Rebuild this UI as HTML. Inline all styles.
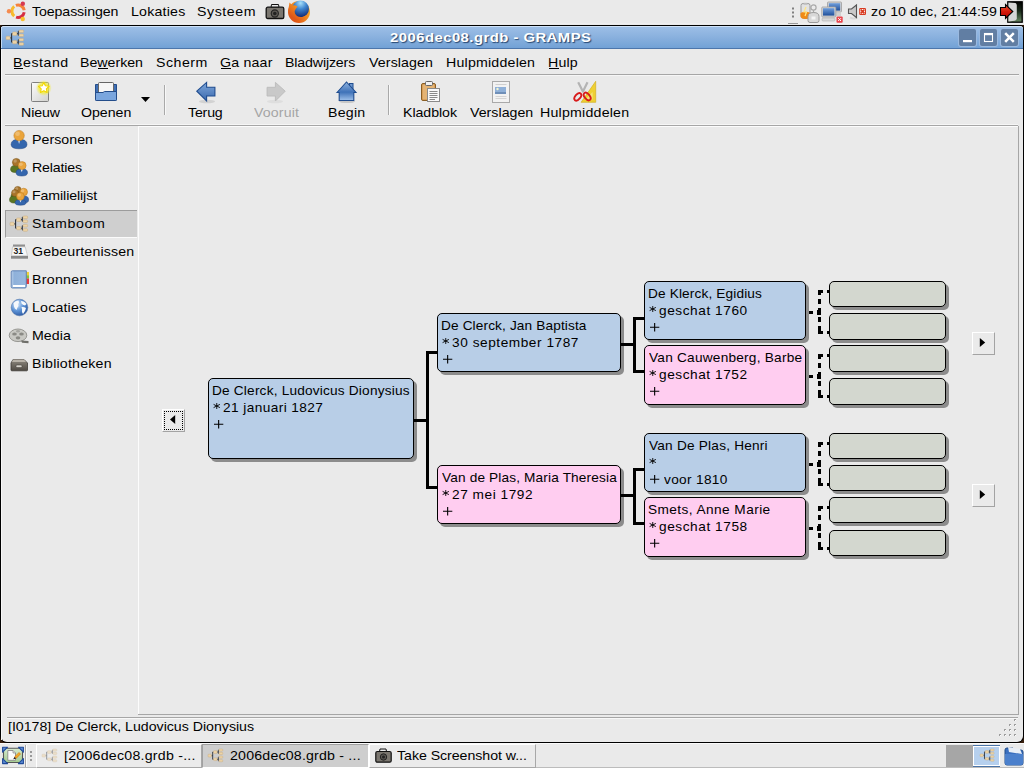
<!DOCTYPE html><html><head><meta charset="utf-8"><style>
html,body{margin:0;padding:0;width:1024px;height:768px;overflow:hidden;background:#eaeaea;position:relative}
.t{position:absolute;white-space:pre;font-family:"Liberation Sans",sans-serif}
svg{overflow:visible}
</style></head><body>
<div style="position:absolute;left:0px;top:0px;width:1024px;height:25px;background:#eaeaea"></div>
<div style="position:absolute;left:0px;top:23px;width:1024px;height:1px;background:#efefef"></div>
<svg style="position:absolute;left:4px;top:0px;" width="26.00" height="24.00" viewBox="0 0 26 24"><path d="M11.88 5.46 A6.2 6.2 0 0 1 20.21 10.23" fill="none" stroke="#f5823c" stroke-width="3"/><path d="M20.21 12.33 A6.2 6.2 0 0 1 12.08 17.11" fill="none" stroke="#d52f42" stroke-width="3"/><path d="M10.20 16.07 A6.2 6.2 0 0 1 10.20 6.43" fill="none" stroke="#f7bb2d" stroke-width="3"/><circle cx="18.82" cy="3.70" r="2.2" fill="#d63a52"/><circle cx="5.00" cy="11.25" r="2.2" fill="#f58b4f"/><circle cx="18.74" cy="18.96" r="2.2" fill="#f8bf2f"/></svg>
<div class="t" style="left:31.93px;top:5px;font-size:13.5px;line-height:13.5px;letter-spacing:-0.094px;font-weight:400;color:#000;transform:scaleX(1.05);transform-origin:0 0;">Toepassingen</div>
<div class="t" style="left:130.61px;top:5px;font-size:13.5px;line-height:13.5px;letter-spacing:0.194px;font-weight:400;color:#000;transform:scaleX(1.05);transform-origin:0 0;">Lokaties</div>
<div class="t" style="left:197.48px;top:5px;font-size:13.5px;line-height:13.5px;letter-spacing:0.546px;font-weight:400;color:#000;transform:scaleX(1.05);transform-origin:0 0;">Systeem</div>
<svg style="position:absolute;left:265px;top:3px;" width="20.00" height="17.00" viewBox="0 0 20 17">
<path d="M6.5 1.5 H13.5 L14 4.5 H6Z" fill="#e8e8e8" stroke="#111"/>
<rect x="1.2" y="4.2" width="17.6" height="11.3" rx="1.6" fill="#7a766f" stroke="#111" stroke-width="1.3"/>
<circle cx="9.8" cy="10.5" r="3.6" fill="#5a5752" stroke="#222" stroke-width="1.1"/>
<circle cx="9.8" cy="10.5" r="1.8" fill="#222"/>
</svg>
<svg style="position:absolute;left:286px;top:0px;" width="26.00" height="24.00" viewBox="0 0 26 24">
<defs><radialGradient id="gGlobe" cx="0.5" cy="0.15" r="0.8"><stop offset="0" stop-color="#a8e0fa"/><stop offset="0.45" stop-color="#3f86cf"/><stop offset="1" stop-color="#16307a"/></radialGradient>
<linearGradient id="gFox" x1="1" y1="0" x2="0" y2="1"><stop offset="0" stop-color="#fbd23a"/><stop offset="0.45" stop-color="#f28a1e"/><stop offset="1" stop-color="#d23a16"/></linearGradient></defs>
<circle cx="13" cy="12" r="11" fill="url(#gFox)"/>
<circle cx="14.5" cy="9" r="8.5" fill="url(#gGlobe)"/>
<path d="M24 11 A11 11 0 0 1 2.2 10.5 L3.5 2.5 L6.5 5.5 Q9.5 4.8 11.5 6.8 L10 8.5 Q8 10.5 9 13.5 Q11 17.5 16 17 Q21 16 24 11Z" fill="url(#gFox)"/>
</svg>
<svg style="position:absolute;left:786px;top:0px;" width="14.00" height="25.00" viewBox="0 0 14 25"><g fill="#808080"><rect x="6" y="7.5" width="2" height="2"/><rect x="6" y="11.5" width="2" height="2"/><rect x="6" y="15.5" width="2" height="2"/></g><rect x="2" y="23" width="10" height="1" fill="#9a9a9a"/></svg>
<svg style="position:absolute;left:798px;top:2px;" width="22.00" height="21.00" viewBox="0 0 22 21">
<path d="M3 3.5 Q3 1.5 5 1.5 H10 Q12 1.5 12 3.5 V14 Q12 16.5 7.5 16.5 Q3 16.5 3 14Z" fill="#e2e2e2" stroke="#9a9a9a"/>
<rect x="5.5" y="0.8" width="4" height="2" fill="#bdbdbd"/>
<path d="M2.5 11 Q7.5 8.5 12.5 11 V14 Q12.5 17 7.5 17 Q2.5 17 2.5 14Z" fill="#f08a16"/>
<path d="M8 5 L6 10 H8.5 L7 14" stroke="#ffe680" stroke-width="1.2" fill="none"/>
<circle cx="15.5" cy="5.5" r="2.6" fill="none" stroke="#a9a9a9" stroke-width="1.2"/>
<path d="M15.5 8 V11" stroke="#a9a9a9" stroke-width="1.2"/>
<path d="M10 14.5 Q10 10.5 15.5 10.5 Q21 10.5 21 14.5 V18.5 Q21 20.5 19 20.5 H12 Q10 20.5 10 18.5Z" fill="#d8d8d8" stroke="#9a9a9a"/>
<rect x="13.5" y="14.5" width="4" height="3" fill="#f4f4f4"/>
</svg>
<svg style="position:absolute;left:821px;top:1px;" width="23.00" height="23.00" viewBox="0 0 23 23">
<defs><linearGradient id="gScr" x1="0" y1="0" x2="0" y2="1"><stop offset="0" stop-color="#6f9edb"/><stop offset="1" stop-color="#1f4f9a"/></linearGradient></defs>
<rect x="6.5" y="1" width="14" height="10" rx="0.8" fill="#d6d6d6" stroke="#9c9c9c" stroke-width="0.8"/>
<rect x="7.8" y="2.2" width="11.4" height="7.4" fill="url(#gScr)"/>
<rect x="10" y="12" width="10" height="3" fill="#d0d0d0"/>
<rect x="0.8" y="6" width="14" height="10" rx="0.8" fill="#d6d6d6" stroke="#9c9c9c" stroke-width="0.8"/>
<rect x="2" y="7.2" width="11.4" height="7.4" fill="url(#gScr)"/>
<rect x="1" y="17" width="13" height="3" rx="1" fill="#d8d8d8" stroke="#b0b0b0" stroke-width="0.6"/>
<rect x="15.5" y="15.5" width="6.2" height="6.2" rx="1" fill="#e8464d"/>
<path d="M17.2 17.2 L20 20 M20 17.2 L17.2 20" stroke="#fff" stroke-width="1"/>
</svg>
<svg style="position:absolute;left:847px;top:4px;" width="21.00" height="16.00" viewBox="0 0 21 16">
<path d="M1.5 5 H4.5 L9.5 1 V13.5 L4.5 9.5 H1.5Z" fill="#c9c9c9" stroke="#555" stroke-width="1.1"/>
<path d="M3 13.5 Q7 15.5 10 13.5" stroke="#000" stroke-opacity="0.08" stroke-width="2" fill="none"/>
<rect x="12.2" y="3.9" width="6.8" height="7" rx="1.2" fill="#d83a20"/>
<rect x="13.3" y="5" width="4.6" height="4.8" fill="#fff"/>
<path d="M13.8 5.5 L17.4 9.3 M17.4 5.5 L13.8 9.3" stroke="#d83a20" stroke-width="1.7"/>
</svg>
<div class="t" style="left:871.38px;top:5px;font-size:13.5px;line-height:13.5px;letter-spacing:0.072px;font-weight:400;color:#000;transform:scaleX(1.05);transform-origin:0 0;">zo 10 dec, 21:44:59</div>
<svg style="position:absolute;left:999px;top:0px;" width="25.00" height="24.00" viewBox="0 0 25 24">
<defs><linearGradient id="gDoor" x1="0" y1="0" x2="0" y2="1"><stop offset="0" stop-color="#000"/><stop offset="0.45" stop-color="#1a2a1a"/><stop offset="1" stop-color="#6a8a64"/></linearGradient>
<linearGradient id="gLo" x1="0" y1="0" x2="0" y2="1"><stop offset="0" stop-color="#ee5a35"/><stop offset="0.5" stop-color="#d41a0a"/><stop offset="1" stop-color="#b00000"/></linearGradient></defs>
<rect x="8.8" y="1.8" width="14.4" height="20.4" fill="url(#gDoor)" stroke="#000" stroke-width="1.3"/>
<path d="M9.4 2.4 L16.5 3 Q17.8 3.6 17.8 5.5 V18.5 Q17.6 20.2 15.5 20.8 L9.4 21.6Z" fill="#d6d6d6"/>
<path d="M1.5 7.5 H6.5 V4.5 L13.8 11.5 L6.5 18.5 V15.5 H1.5Z" fill="url(#gLo)" stroke="#000" stroke-width="1.1" stroke-linejoin="miter"/>
</svg>
<div style="position:absolute;left:0px;top:25px;width:1024px;height:718px;background:#3a200e"></div>
<div style="position:absolute;left:0px;top:25px;width:1024px;height:718px;background:#000;border-radius:4px 4px 7px 7px"></div>
<div style="position:absolute;left:1px;top:26px;width:1022px;height:716px;background:#eaeaea;border-radius:3px 3px 6px 6px"></div>
<div style="position:absolute;left:1px;top:27px;width:1px;height:713px;background:#f8f8f8"></div>
<div style="position:absolute;left:1px;top:26px;width:1022px;height:23px;background:linear-gradient(#9cbee6,#8ab1de 45%,#70a0d5);border-radius:3px 3px 0 0;border-top:1px solid #cfe2f7;box-sizing:border-box"></div>
<div style="position:absolute;left:1px;top:48px;width:1022px;height:1px;background:#4d76ab"></div>
<div style="position:absolute;left:1px;top:28px;width:1px;height:20px;background:#c4daf2"></div>
<svg style="position:absolute;left:5.7px;top:29.8px;" width="18.00" height="16.00" viewBox="0 0 18 16"><path d="M4 7.9 H5.6 M5.6 3.6 V12.3 M5.6 3.6 H6.8 M5.6 12.3 H6.8 M10.6 3.6 H12.3 M12.3 1.3 V5.3 M12.3 1.3 H13 M12.3 5.3 H13 M10.6 12.3 H12.3 M12.3 9.7 V14 M12.3 9.7 H13 M12.3 14 H13" stroke="#2c3440" stroke-width="1.1" fill="none"/><rect x="0" y="6.2" width="4.2" height="3.4" rx="0.9" fill="#ecd3a6" stroke="#c9ab7c" stroke-width="0.5"/><rect x="6.5" y="2" width="4.4" height="3.4" rx="0.9" fill="#ecd3a6" stroke="#c9ab7c" stroke-width="0.5"/><rect x="6.5" y="10.6" width="4.4" height="3.2" rx="0.9" fill="#ecd3a6" stroke="#c9ab7c" stroke-width="0.5"/><rect x="13" y="0" width="4.6" height="2.6" rx="0.9" fill="#ecd3a6" stroke="#c9ab7c" stroke-width="0.5"/><rect x="13" y="4" width="4.6" height="2.6" rx="0.9" fill="#ecd3a6" stroke="#c9ab7c" stroke-width="0.5"/><rect x="13" y="8.4" width="4.6" height="2.6" rx="0.9" fill="#ecd3a6" stroke="#c9ab7c" stroke-width="0.5"/><rect x="13" y="12.7" width="4.6" height="2.6" rx="0.9" fill="#ecd3a6" stroke="#c9ab7c" stroke-width="0.5"/></svg>
<div class="t" style="left:389.80px;top:31px;font-size:13.5px;line-height:13.5px;letter-spacing:0.425px;font-weight:700;color:#fff;transform:scaleX(1.1);transform-origin:0 0;text-shadow:1px 1px 1px #26466f">2006dec08.grdb - GRAMPS</div>
<div style="position:absolute;left:959px;top:29px;width:17px;height:17px;background:#617ea3;border-radius:2px;box-shadow:0 0 0 1px #9ab9df"></div>
<div style="position:absolute;left:980px;top:29px;width:17px;height:17px;background:#617ea3;border-radius:2px;box-shadow:0 0 0 1px #9ab9df"></div>
<div style="position:absolute;left:1001px;top:29px;width:17px;height:17px;background:#617ea3;border-radius:2px;box-shadow:0 0 0 1px #9ab9df"></div>
<svg style="position:absolute;left:959px;top:29px;" width="60.00" height="18.00" viewBox="0 0 60 18">
<rect x="4" y="11" width="9" height="2.2" fill="#fff"/>
<rect x="25.5" y="4.5" width="8" height="8" fill="none" stroke="#fff" stroke-width="1.1"/>
<rect x="25" y="4" width="9" height="2.2" fill="#fff"/>
<path d="M46.2 4.2 L54.8 12.8 M54.8 4.2 L46.2 12.8" stroke="#fff" stroke-width="2.5"/>
</svg>
<div class="t" style="left:13.21px;top:56px;font-size:13.5px;line-height:13.5px;letter-spacing:0.501px;font-weight:400;color:#000;transform:scaleX(1.05);transform-origin:0 0;">Bestand</div>
<div class="t" style="left:80.21px;top:56px;font-size:13.5px;line-height:13.5px;letter-spacing:-0.007px;font-weight:400;color:#000;transform:scaleX(1.05);transform-origin:0 0;">Bewerken</div>
<div class="t" style="left:156.28px;top:56px;font-size:13.5px;line-height:13.5px;letter-spacing:0.488px;font-weight:400;color:#000;transform:scaleX(1.05);transform-origin:0 0;">Scherm</div>
<div class="t" style="left:219.67px;top:56px;font-size:13.5px;line-height:13.5px;letter-spacing:0.179px;font-weight:400;color:#000;transform:scaleX(1.05);transform-origin:0 0;">Ga naar</div>
<div class="t" style="left:285.41px;top:56px;font-size:13.5px;line-height:13.5px;letter-spacing:-0.139px;font-weight:400;color:#000;transform:scaleX(1.05);transform-origin:0 0;">Bladwijzers</div>
<div class="t" style="left:369.15px;top:56px;font-size:13.5px;line-height:13.5px;letter-spacing:0.113px;font-weight:400;color:#000;transform:scaleX(1.05);transform-origin:0 0;">Verslagen</div>
<div class="t" style="left:445.81px;top:56px;font-size:13.5px;line-height:13.5px;letter-spacing:0.200px;font-weight:400;color:#000;transform:scaleX(1.05);transform-origin:0 0;">Hulpmiddelen</div>
<div class="t" style="left:547.81px;top:56px;font-size:13.5px;line-height:13.5px;letter-spacing:0.180px;font-weight:400;color:#000;transform:scaleX(1.05);transform-origin:0 0;">Hulp</div>
<div style="position:absolute;left:14px;top:68px;width:9px;height:1px;background:#000"></div>
<div style="position:absolute;left:98px;top:68px;width:10px;height:1px;background:#000"></div>
<div style="position:absolute;left:221px;top:68px;width:10px;height:1px;background:#000"></div>
<div style="position:absolute;left:549px;top:68px;width:10px;height:1px;background:#000"></div>
<div style="position:absolute;left:5px;top:74px;width:1014px;height:1px;background:#a6a6a6"></div>
<div style="position:absolute;left:5px;top:75px;width:1014px;height:1px;background:#f6f6f6"></div>
<div class="t" style="left:21.21px;top:106px;font-size:13.5px;line-height:13.5px;letter-spacing:-0.078px;font-weight:400;color:#000;transform:scaleX(1.05);transform-origin:0 0;">Nieuw</div>
<div class="t" style="left:81.28px;top:106px;font-size:13.5px;line-height:13.5px;letter-spacing:-0.022px;font-weight:400;color:#000;transform:scaleX(1.05);transform-origin:0 0;">Openen</div>
<div class="t" style="left:187.93px;top:106px;font-size:13.5px;line-height:13.5px;letter-spacing:-0.177px;font-weight:400;color:#000;transform:scaleX(1.05);transform-origin:0 0;">Terug</div>
<div class="t" style="left:253.75px;top:106px;font-size:13.5px;line-height:13.5px;letter-spacing:0.138px;font-weight:400;color:#a5a5a5;transform:scaleX(1.05);transform-origin:0 0;">Vooruit</div>
<div class="t" style="left:328.21px;top:106px;font-size:13.5px;line-height:13.5px;letter-spacing:0.220px;font-weight:400;color:#000;transform:scaleX(1.05);transform-origin:0 0;">Begin</div>
<div class="t" style="left:403.20px;top:106px;font-size:13.5px;line-height:13.5px;letter-spacing:-0.051px;font-weight:400;color:#000;transform:scaleX(1.05);transform-origin:0 0;">Kladblok</div>
<div class="t" style="left:469.95px;top:106px;font-size:13.5px;line-height:13.5px;letter-spacing:0.022px;font-weight:400;color:#000;transform:scaleX(1.05);transform-origin:0 0;">Verslagen</div>
<div class="t" style="left:539.81px;top:106px;font-size:13.5px;line-height:13.5px;letter-spacing:0.210px;font-weight:400;color:#000;transform:scaleX(1.05);transform-origin:0 0;">Hulpmiddelen</div>
<svg style="position:absolute;left:30px;top:80px;" width="24.00" height="24.00" viewBox="0 0 24 24">
<defs><linearGradient id="gNew" x1="0" y1="0" x2="1" y2="1"><stop offset="0" stop-color="#fbfbfb"/><stop offset="1" stop-color="#d2d2ce"/></linearGradient>
<radialGradient id="gGlow"><stop offset="0" stop-color="#ffff60"/><stop offset="0.6" stop-color="#f2ec3a" stop-opacity="0.8"/><stop offset="1" stop-color="#f2ec3a" stop-opacity="0"/></radialGradient></defs>
<rect x="1.5" y="2.5" width="17" height="19" rx="1" fill="url(#gNew)" stroke="#7f7f7f"/>
<circle cx="13.8" cy="8" r="8" fill="url(#gGlow)"/>
<path d="M13.80 2.40 L15.39 5.82 L19.13 6.27 L16.37 8.83 L17.09 12.53 L13.80 10.70 L10.51 12.53 L11.23 8.83 L8.47 6.27 L12.21 5.82Z" fill="#fff" stroke="#f2d600" stroke-width="1.1" stroke-linejoin="round"/>
</svg>
<svg style="position:absolute;left:94px;top:80px;" width="24.00" height="22.00" viewBox="0 0 24 22">
<path d="M1.5 4.5 H4.5 V12 H19.5 V4.5 H22.5 V19.5 Q22.5 20.5 21.5 20.5 H2.5 Q1.5 20.5 1.5 19.5Z" fill="#3f6fb5" stroke="#244d8a"/>
<rect x="4.5" y="2.5" width="15" height="11" rx="1" fill="#f6f6f6" stroke="#666"/>
<path d="M1.5 12.5 H9 L10.5 11.5 H22.5 V19.5 Q22.5 20.5 21.5 20.5 H2.5 Q1.5 20.5 1.5 19.5Z" fill="#7aa6de" stroke="#244d8a"/>
</svg>
<svg style="position:absolute;left:140px;top:96px;" width="11.00" height="7.00" viewBox="0 0 11 7"><path d="M1 1 H10 L5.5 6Z" fill="#000"/></svg>
<div style="position:absolute;left:164px;top:85px;width:1px;height:30px;background:#a9a9a9"></div>
<div style="position:absolute;left:165px;top:85px;width:1px;height:30px;background:#f8f8f8"></div>
<div style="position:absolute;left:388px;top:85px;width:1px;height:30px;background:#a9a9a9"></div>
<div style="position:absolute;left:389px;top:85px;width:1px;height:30px;background:#f8f8f8"></div>
<svg style="position:absolute;left:195px;top:80px;" width="22.00" height="24.00" viewBox="0 0 22 24">
<defs><linearGradient id="gArr" x1="0" y1="0" x2="0" y2="1"><stop offset="0" stop-color="#7ea7db"/><stop offset="1" stop-color="#3a68ad"/></linearGradient></defs>
<ellipse cx="12" cy="21.5" rx="8" ry="1.8" fill="#000" opacity="0.10"/>
<path d="M1.8 11.2 L11.6 2.4 V7.3 H19.9 V16 H11.6 V21Z" fill="url(#gArr)" stroke="#1f4c8f" stroke-width="1.1" stroke-linejoin="miter"/>
</svg>
<svg style="position:absolute;left:265px;top:80px;" width="22.00" height="24.00" viewBox="0 0 22 24">
<ellipse cx="10" cy="21.5" rx="8" ry="1.8" fill="#000" opacity="0.05"/>
<path d="M20.2 11.2 L10.4 2.4 V7.3 H2.1 V16 H10.4 V21Z" fill="#c9c9c9" stroke="#bdbdbd" stroke-width="1"/>
</svg>
<svg style="position:absolute;left:336px;top:80px;" width="22.00" height="24.00" viewBox="0 0 22 24">
<defs><linearGradient id="gHome" x1="0" y1="0" x2="0" y2="1"><stop offset="0" stop-color="#8fb3e0"/><stop offset="0.55" stop-color="#3f72b8"/><stop offset="1" stop-color="#9ec0ea"/></linearGradient></defs>
<ellipse cx="11" cy="21.5" rx="8" ry="1.6" fill="#000" opacity="0.15"/>
<rect x="13.5" y="3.5" width="3.5" height="6" fill="#6d97cf" stroke="#1f4c8f"/>
<path d="M1 12.5 L10.5 2 L20 12.5 H17.8 V20.5 H3.2 V12.5Z" fill="url(#gHome)" stroke="#1f4c8f" stroke-width="1.1" stroke-linejoin="miter"/>
</svg>
<svg style="position:absolute;left:420px;top:80px;" width="22.00" height="23.00" viewBox="0 0 22 23">
<rect x="1.5" y="3.5" width="14" height="17" rx="1.5" fill="#d9a05a" stroke="#8a5e24"/>
<rect x="3" y="5" width="11" height="14" fill="#f0c890" opacity="0.5"/>
<rect x="5.5" y="1.5" width="7" height="4" rx="1" fill="#f2f2f2" stroke="#666"/>
<rect x="7.5" y="8.5" width="12" height="13" fill="#fafafa" stroke="#8a8a8a"/>
<path d="M9.5 11.5 H17.5 M9.5 13.5 H17.5 M9.5 15.5 H17.5 M9.5 17.5 H17.5 M9.5 19.5 H15" stroke="#8a8a8a" stroke-width="1"/>
</svg>
<svg style="position:absolute;left:491px;top:80px;" width="20.00" height="24.00" viewBox="0 0 20 24">
<rect x="1.5" y="1.5" width="17" height="21" fill="#f2f2f2" stroke="#a9a9a9"/>
<path d="M4.5 4.5 H15.5" stroke="#cfcfcf"/>
<rect x="4" y="7" width="11" height="7" fill="#8fb0d8"/>
<rect x="4" y="12" width="11" height="2" fill="#6f8fb8"/>
<circle cx="6.5" cy="9" r="1.2" fill="#f4f6d0"/>
<path d="M4.5 16.5 H15.5 M4.5 18.5 H15.5" stroke="#d4d4d4"/>
</svg>
<svg style="position:absolute;left:573px;top:80px;" width="24.00" height="24.00" viewBox="0 0 24 24">
<path d="M22.7 1.3 V22.3 H8.1Z" fill="#efd033" stroke="#d2b020" stroke-width="0.7"/>
<path d="M19.6 12 V19.6 H12.4Z" fill="#f4e27a"/>
<path d="M5.2 2.3 L10.3 12.3 M14.5 2.3 L9.6 12.3" stroke="#b4b4b4" stroke-width="2.2"/>
<ellipse cx="4.8" cy="16.8" rx="2.5" ry="4.4" transform="rotate(40 4.8 16.8)" fill="none" stroke="#d81b1b" stroke-width="1.9"/>
<ellipse cx="14.2" cy="16.5" rx="2.5" ry="4.4" transform="rotate(-40 14.2 16.5)" fill="none" stroke="#d81b1b" stroke-width="1.9"/>
</svg>
<div style="position:absolute;left:5px;top:124px;width:1013px;height:1px;background:#f6f6f6"></div>
<div style="position:absolute;left:5px;top:125px;width:1013px;height:1px;background:#a6a6a6"></div>
<div style="position:absolute;left:5px;top:210px;width:132px;height:28px;background:#cfcfcf;border-top:1px solid #9c9c9c;border-left:1px solid #9c9c9c;border-bottom:1px solid #fbfbfb;box-sizing:border-box"></div>
<div class="t" style="left:32.41px;top:133px;font-size:13.5px;line-height:13.5px;letter-spacing:0.041px;font-weight:400;color:#000;transform:scaleX(1.05);transform-origin:0 0;">Personen</div>
<div class="t" style="left:32.41px;top:161px;font-size:13.5px;line-height:13.5px;letter-spacing:-0.167px;font-weight:400;color:#000;transform:scaleX(1.05);transform-origin:0 0;">Relaties</div>
<div class="t" style="left:32.21px;top:189px;font-size:13.5px;line-height:13.5px;letter-spacing:-0.092px;font-weight:400;color:#000;transform:scaleX(1.05);transform-origin:0 0;">Familielijst</div>
<div class="t" style="left:32.28px;top:217px;font-size:13.5px;line-height:13.5px;letter-spacing:0.574px;font-weight:400;color:#000;transform:scaleX(1.05);transform-origin:0 0;">Stamboom</div>
<div class="t" style="left:32.47px;top:245px;font-size:13.5px;line-height:13.5px;letter-spacing:0.156px;font-weight:400;color:#000;transform:scaleX(1.05);transform-origin:0 0;">Gebeurtenissen</div>
<div class="t" style="left:32.21px;top:273px;font-size:13.5px;line-height:13.5px;letter-spacing:0.265px;font-weight:400;color:#000;transform:scaleX(1.05);transform-origin:0 0;">Bronnen</div>
<div class="t" style="left:32.21px;top:301px;font-size:13.5px;line-height:13.5px;letter-spacing:0.171px;font-weight:400;color:#000;transform:scaleX(1.05);transform-origin:0 0;">Locaties</div>
<div class="t" style="left:32.21px;top:329px;font-size:13.5px;line-height:13.5px;letter-spacing:0.039px;font-weight:400;color:#000;transform:scaleX(1.05);transform-origin:0 0;">Media</div>
<div class="t" style="left:32.21px;top:357px;font-size:13.5px;line-height:13.5px;letter-spacing:0.204px;font-weight:400;color:#000;transform:scaleX(1.05);transform-origin:0 0;">Bibliotheken</div>
<svg style="position:absolute;left:0px;top:0px;" width="34.00" height="210.00" viewBox="0 0 34 210"><path d="M11.1 144.48 Q11.1 139.2 19.05 139.2 Q27 139.2 27 144.48 Q27 148.8 19.05 148.8 Q11.1 148.8 11.1 144.48Z" fill="#3466ad" stroke="#20457f" stroke-width="0.5"/><path d="M17.95 139.40 L19.05 144.00 L20.15 139.40Z" fill="#f4f4f4"/><circle cx="19.1" cy="135.6" r="5.2" fill="#eaa53c" stroke="#b8761c" stroke-width="0.5"/><circle cx="17.54" cy="133.78" r="2.34" fill="#fff" opacity="0.25"/><path d="M10.6 169.31 Q10.6 165.4 15.05 165.4 Q19.5 165.4 19.5 169.31 Q19.5 172.5 15.05 172.5 Q10.6 172.5 10.6 169.31Z" fill="#5a7622" stroke="#3c5214" stroke-width="0.5"/><circle cx="16.3" cy="162.3" r="3.9" fill="#a8742a" stroke="#7a5214" stroke-width="0.5"/><circle cx="15.13" cy="160.94" r="1.75" fill="#fff" opacity="0.25"/><path d="M16 172.72 Q16 168.7 21.75 168.7 Q27.5 168.7 27.5 172.72 Q27.5 176 21.75 176 Q16 176 16 172.72Z" fill="#3466ad" stroke="#20457f" stroke-width="0.5"/><path d="M20.65 168.90 L21.75 172.35 L22.85 168.90Z" fill="#f4f4f4"/><circle cx="22.1" cy="165.6" r="4.0" fill="#eaa53c" stroke="#b8761c" stroke-width="0.5"/><circle cx="20.90" cy="164.20" r="1.80" fill="#fff" opacity="0.25"/><path d="M11 196.30 Q11 193 15.50 193 Q20 193 20 196.30 Q20 199 15.50 199 Q11 199 11 196.30Z" fill="#5a7622" stroke="#3c5214" stroke-width="0.5"/><circle cx="17.7" cy="189.8" r="3.4" fill="#a8742a" stroke="#7a5214" stroke-width="0.5"/><circle cx="16.68" cy="188.61" r="1.53" fill="#fff" opacity="0.25"/><path d="M9.5 199.85 Q9.5 196 13.75 196 Q18 196 18 199.85 Q18 203 13.75 203 Q9.5 203 9.5 199.85Z" fill="#5a7622" stroke="#3c5214" stroke-width="0.5"/><circle cx="15" cy="193" r="3.5" fill="#a8742a" stroke="#7a5214" stroke-width="0.5"/><circle cx="13.95" cy="191.78" r="1.57" fill="#fff" opacity="0.25"/><path d="M20.5 199.85 Q20.5 196 24.55 196 Q28.6 196 28.6 199.85 Q28.6 203 24.55 203 Q20.5 203 20.5 199.85Z" fill="#3466ad" stroke="#20457f" stroke-width="0.5"/><circle cx="23.7" cy="192" r="3.8" fill="#eaa53c" stroke="#b8761c" stroke-width="0.5"/><circle cx="22.56" cy="190.67" r="1.71" fill="#fff" opacity="0.25"/><path d="M15 202.68 Q15 199.6 20.50 199.6 Q26 199.6 26 202.68 Q26 205.2 20.50 205.2 Q15 205.2 15 202.68Z" fill="#3466ad" stroke="#20457f" stroke-width="0.5"/><path d="M19.40 199.80 L20.50 202.40 L21.60 199.80Z" fill="#f4f4f4"/><circle cx="20.4" cy="196.3" r="3.9" fill="#eaa53c" stroke="#b8761c" stroke-width="0.5"/><circle cx="19.23" cy="194.94" r="1.75" fill="#fff" opacity="0.25"/></svg>
<svg style="position:absolute;left:9.9px;top:216px;" width="18.00" height="16.00" viewBox="0 0 18 16"><path d="M4 7.9 H5.6 M5.6 3.6 V12.3 M5.6 3.6 H6.8 M5.6 12.3 H6.8 M10.6 3.6 H12.3 M12.3 1.3 V5.3 M12.3 1.3 H13 M12.3 5.3 H13 M10.6 12.3 H12.3 M12.3 9.7 V14 M12.3 9.7 H13 M12.3 14 H13" stroke="#2c3440" stroke-width="1.1" fill="none"/><rect x="0" y="6.2" width="4.2" height="3.4" rx="0.9" fill="#ecd3a6" stroke="#c9ab7c" stroke-width="0.5"/><rect x="6.5" y="2" width="4.4" height="3.4" rx="0.9" fill="#ecd3a6" stroke="#c9ab7c" stroke-width="0.5"/><rect x="6.5" y="10.6" width="4.4" height="3.2" rx="0.9" fill="#ecd3a6" stroke="#c9ab7c" stroke-width="0.5"/><rect x="13" y="0" width="4.6" height="2.6" rx="0.9" fill="#ecd3a6" stroke="#c9ab7c" stroke-width="0.5"/><rect x="13" y="4" width="4.6" height="2.6" rx="0.9" fill="#ecd3a6" stroke="#c9ab7c" stroke-width="0.5"/><rect x="13" y="8.4" width="4.6" height="2.6" rx="0.9" fill="#ecd3a6" stroke="#c9ab7c" stroke-width="0.5"/><rect x="13" y="12.7" width="4.6" height="2.6" rx="0.9" fill="#ecd3a6" stroke="#c9ab7c" stroke-width="0.5"/></svg>
<svg style="position:absolute;left:6px;top:240px;" width="26.00" height="22.00" viewBox="0 0 26 22">
<rect x="7" y="4.5" width="12" height="2.5" fill="#8f8f8f"/>
<path d="M6.5 6.8 H19.2 L21.5 15.8 H5.5Z" fill="#f7f7f7" stroke="#b5b5b5" stroke-width="0.6"/>
<text x="7.6" y="14.2" font-size="8.6" font-family="Liberation Sans" font-weight="700" fill="#222">31</text>
<path d="M5 16 H22 V18.7 H5Z" fill="#8a8a8a"/>
</svg>
<svg style="position:absolute;left:6px;top:268px;" width="26.00" height="22.00" viewBox="0 0 26 22">
<defs><linearGradient id="gBook" x1="0" y1="0" x2="1" y2="0"><stop offset="0" stop-color="#b9cfea"/><stop offset="0.2" stop-color="#8fb1da"/><stop offset="1" stop-color="#9ab9df"/></linearGradient></defs>
<rect x="20" y="4" width="3" height="3.5" fill="#f2d23a"/>
<rect x="20" y="7.3" width="3" height="3.3" fill="#8cc43a"/>
<rect x="20" y="10.5" width="3" height="5.5" fill="#e83a3a"/>
<path d="M5.2 4 Q5.2 2.8 6.4 2.8 H20.3 V18.5 Q20.3 20 19 20 H6.4 Q5.2 20 5.2 18.8Z" fill="url(#gBook)" stroke="#5a7db0" stroke-width="0.9"/>
<rect x="7" y="17" width="12" height="2" fill="#fff"/>
</svg>
<svg style="position:absolute;left:9px;top:297px;" width="20.00" height="20.00" viewBox="0 0 20 20">
<defs><radialGradient id="gEarth" cx="0.35" cy="0.3" r="0.8"><stop offset="0" stop-color="#d6e8fa"/><stop offset="0.5" stop-color="#5d93d6"/><stop offset="1" stop-color="#234f99"/></radialGradient></defs>
<circle cx="10.5" cy="10.5" r="8.3" fill="url(#gEarth)" stroke="#4a70a8" stroke-width="0.6"/>
<path d="M4.5 6 Q6.5 3.8 9.5 3.6 L10 5.5 Q8.5 7 9.5 9 Q8 11 7.5 13 Q5.5 11.5 5 9.5Z" fill="#f6f9fc"/>
<path d="M12 4 Q15.5 4 17.5 7 L16 8.5 Q13.5 8 12.5 6.5Z M12.5 10 Q15 9.5 17 11 Q16.5 14 14 17 Q12.5 15 13 12.5Z" fill="#f6f9fc"/>
</svg>
<svg style="position:absolute;left:8px;top:327px;" width="22.00" height="18.00" viewBox="0 0 22 18">
<ellipse cx="10" cy="8.3" rx="8.8" ry="6.3" fill="#c9c9c4" stroke="#8f8f8a" stroke-width="0.9"/>
<ellipse cx="6.5" cy="7" rx="2.3" ry="1.6" fill="#8a8a85"/>
<ellipse cx="13.5" cy="7" rx="2.3" ry="1.6" fill="#8a8a85"/>
<ellipse cx="10" cy="10.8" rx="2.3" ry="1.6" fill="#8a8a85"/>
<ellipse cx="10" cy="4.3" rx="2" ry="1.2" fill="#a5a5a0"/>
<path d="M13 13.5 L20.5 14 L20.5 16.3 L14 15.8Z" fill="#6f6f6a"/>
</svg>
<svg style="position:absolute;left:9px;top:357px;" width="22.00" height="16.00" viewBox="0 0 22 16">
<defs><linearGradient id="gLib" x1="0" y1="0" x2="0" y2="1"><stop offset="0" stop-color="#8f897f"/><stop offset="1" stop-color="#4f4a43"/></linearGradient></defs>
<path d="M4 2.5 H15 L18.5 6 V13 Q18.5 13.8 17.7 13.8 H2.8 Q2 13.8 2 13 V6Z" fill="url(#gLib)" stroke="#3c3934" stroke-width="0.8"/>
<path d="M4 2.5 H15 L17 5 H3Z" fill="#b8b2a8"/>
<rect x="7" y="8" width="6" height="2.6" rx="1" fill="#d6d2ca" stroke="#3c3934" stroke-width="0.5"/>
</svg>
<div style="position:absolute;left:138px;top:126px;width:881px;height:1px;background:#fcfcfc"></div>
<div style="position:absolute;left:138px;top:126px;width:1px;height:589px;background:#fcfcfc"></div>
<div style="position:absolute;left:1018px;top:126px;width:1px;height:589px;background:#a6a6a6"></div>
<div style="position:absolute;left:138px;top:714px;width:881px;height:1px;background:#a6a6a6"></div>
<div style="position:absolute;left:208px;top:378px;width:206px;height:81px;background:#b8cee7;border:1px solid #000;border-radius:5px;box-sizing:border-box;box-shadow:3px 3px 0 #8c8c8c"></div>
<div class="t" style="left:212.31px;top:384px;font-size:13px;line-height:13px;letter-spacing:0.184px;font-weight:400;color:#000;transform:scaleX(1.05);transform-origin:0 0;">De Clerck, Ludovicus Dionysius</div>
<svg style="position:absolute;left:213.0px;top:403.3px;" width="8.00" height="6.00" viewBox="0 0 8 6"><path d="M3.75 0 V6 M0.6 1.4 L6.9 4.6 M0.6 4.6 L6.9 1.4" stroke="#000" stroke-width="0.9" fill="none"/></svg>
<div class="t" style="left:223.12px;top:401px;font-size:13px;line-height:13px;letter-spacing:0.396px;font-weight:400;color:#000;transform:scaleX(1.05);transform-origin:0 0;">21 januari 1827</div>
<svg style="position:absolute;left:214.10000000000002px;top:420.2px;" width="10.00" height="9.00" viewBox="0 0 10 9"><path d="M4.65 0 V8.6 M0 4.3 H9.3" stroke="#000" stroke-width="1.1" fill="none"/></svg>
<div style="position:absolute;left:437px;top:313px;width:184px;height:59px;background:#b8cee7;border:1px solid #000;border-radius:5px;box-sizing:border-box;box-shadow:3px 3px 0 #8c8c8c"></div>
<div class="t" style="left:441.31px;top:319px;font-size:13px;line-height:13px;letter-spacing:0.122px;font-weight:400;color:#000;transform:scaleX(1.05);transform-origin:0 0;">De Clerck, Jan Baptista</div>
<svg style="position:absolute;left:442.0px;top:338.3px;" width="8.00" height="6.00" viewBox="0 0 8 6"><path d="M3.75 0 V6 M0.6 1.4 L6.9 4.6 M0.6 4.6 L6.9 1.4" stroke="#000" stroke-width="0.9" fill="none"/></svg>
<div class="t" style="left:451.84px;top:336px;font-size:13px;line-height:13px;letter-spacing:0.524px;font-weight:400;color:#000;transform:scaleX(1.05);transform-origin:0 0;">30 september 1787</div>
<svg style="position:absolute;left:443.1px;top:355.2px;" width="10.00" height="9.00" viewBox="0 0 10 9"><path d="M4.65 0 V8.6 M0 4.3 H9.3" stroke="#000" stroke-width="1.1" fill="none"/></svg>
<div style="position:absolute;left:437px;top:465px;width:184px;height:59px;background:#ffcdf0;border:1px solid #000;border-radius:5px;box-sizing:border-box;box-shadow:3px 3px 0 #8c8c8c"></div>
<div class="t" style="left:441.95px;top:471px;font-size:13px;line-height:13px;letter-spacing:0.139px;font-weight:400;color:#000;transform:scaleX(1.05);transform-origin:0 0;">Van de Plas, Maria Theresia</div>
<svg style="position:absolute;left:442.0px;top:490.3px;" width="8.00" height="6.00" viewBox="0 0 8 6"><path d="M3.75 0 V6 M0.6 1.4 L6.9 4.6 M0.6 4.6 L6.9 1.4" stroke="#000" stroke-width="0.9" fill="none"/></svg>
<div class="t" style="left:452.12px;top:488px;font-size:13px;line-height:13px;letter-spacing:0.518px;font-weight:400;color:#000;transform:scaleX(1.05);transform-origin:0 0;">27 mei 1792</div>
<svg style="position:absolute;left:443.1px;top:507.2px;" width="10.00" height="9.00" viewBox="0 0 10 9"><path d="M4.65 0 V8.6 M0 4.3 H9.3" stroke="#000" stroke-width="1.1" fill="none"/></svg>
<div style="position:absolute;left:644px;top:281px;width:162px;height:59px;background:#b8cee7;border:1px solid #000;border-radius:5px;box-sizing:border-box;box-shadow:3px 3px 0 #8c8c8c"></div>
<div class="t" style="left:648.31px;top:287px;font-size:13px;line-height:13px;letter-spacing:0.131px;font-weight:400;color:#000;transform:scaleX(1.05);transform-origin:0 0;">De Klerck, Egidius</div>
<svg style="position:absolute;left:649.0px;top:306.3px;" width="8.00" height="6.00" viewBox="0 0 8 6"><path d="M3.75 0 V6 M0.6 1.4 L6.9 4.6 M0.6 4.6 L6.9 1.4" stroke="#000" stroke-width="0.9" fill="none"/></svg>
<div class="t" style="left:658.81px;top:304px;font-size:13px;line-height:13px;letter-spacing:0.538px;font-weight:400;color:#000;transform:scaleX(1.05);transform-origin:0 0;">geschat 1760</div>
<svg style="position:absolute;left:650.0999999999999px;top:323.2px;" width="10.00" height="9.00" viewBox="0 0 10 9"><path d="M4.65 0 V8.6 M0 4.3 H9.3" stroke="#000" stroke-width="1.1" fill="none"/></svg>
<div style="position:absolute;left:644px;top:345px;width:162px;height:60px;background:#ffcdf0;border:1px solid #000;border-radius:5px;box-sizing:border-box;box-shadow:3px 3px 0 #8c8c8c"></div>
<div class="t" style="left:648.95px;top:351px;font-size:13px;line-height:13px;letter-spacing:0.219px;font-weight:400;color:#000;transform:scaleX(1.05);transform-origin:0 0;">Van Cauwenberg, Barbe</div>
<svg style="position:absolute;left:649.0px;top:370.3px;" width="8.00" height="6.00" viewBox="0 0 8 6"><path d="M3.75 0 V6 M0.6 1.4 L6.9 4.6 M0.6 4.6 L6.9 1.4" stroke="#000" stroke-width="0.9" fill="none"/></svg>
<div class="t" style="left:658.81px;top:368px;font-size:13px;line-height:13px;letter-spacing:0.528px;font-weight:400;color:#000;transform:scaleX(1.05);transform-origin:0 0;">geschat 1752</div>
<svg style="position:absolute;left:650.0999999999999px;top:387.2px;" width="10.00" height="9.00" viewBox="0 0 10 9"><path d="M4.65 0 V8.6 M0 4.3 H9.3" stroke="#000" stroke-width="1.1" fill="none"/></svg>
<div style="position:absolute;left:644px;top:433px;width:162px;height:59px;background:#b8cee7;border:1px solid #000;border-radius:5px;box-sizing:border-box;box-shadow:3px 3px 0 #8c8c8c"></div>
<div class="t" style="left:648.95px;top:439px;font-size:13px;line-height:13px;letter-spacing:0.200px;font-weight:400;color:#000;transform:scaleX(1.05);transform-origin:0 0;">Van De Plas, Henri</div>
<svg style="position:absolute;left:649.0px;top:458.3px;" width="8.00" height="6.00" viewBox="0 0 8 6"><path d="M3.75 0 V6 M0.6 1.4 L6.9 4.6 M0.6 4.6 L6.9 1.4" stroke="#000" stroke-width="0.9" fill="none"/></svg>
<svg style="position:absolute;left:650.0999999999999px;top:475.2px;" width="10.00" height="9.00" viewBox="0 0 10 9"><path d="M4.65 0 V8.6 M0 4.3 H9.3" stroke="#000" stroke-width="1.1" fill="none"/></svg>
<div class="t" style="left:664.44px;top:473px;font-size:13px;line-height:13px;letter-spacing:0.309px;font-weight:400;color:#000;transform:scaleX(1.05);transform-origin:0 0;">voor 1810</div>
<div style="position:absolute;left:644px;top:497px;width:162px;height:60px;background:#ffcdf0;border:1px solid #000;border-radius:5px;box-sizing:border-box;box-shadow:3px 3px 0 #8c8c8c"></div>
<div class="t" style="left:648.48px;top:503px;font-size:13px;line-height:13px;letter-spacing:0.409px;font-weight:400;color:#000;transform:scaleX(1.05);transform-origin:0 0;">Smets, Anne Marie</div>
<svg style="position:absolute;left:649.0px;top:522.3px;" width="8.00" height="6.00" viewBox="0 0 8 6"><path d="M3.75 0 V6 M0.6 1.4 L6.9 4.6 M0.6 4.6 L6.9 1.4" stroke="#000" stroke-width="0.9" fill="none"/></svg>
<div class="t" style="left:658.81px;top:520px;font-size:13px;line-height:13px;letter-spacing:0.538px;font-weight:400;color:#000;transform:scaleX(1.05);transform-origin:0 0;">geschat 1758</div>
<svg style="position:absolute;left:650.0999999999999px;top:539.2px;" width="10.00" height="9.00" viewBox="0 0 10 9"><path d="M4.65 0 V8.6 M0 4.3 H9.3" stroke="#000" stroke-width="1.1" fill="none"/></svg>
<div style="position:absolute;left:829px;top:281px;width:117px;height:26px;background:#d3d7cf;border:1px solid #000;border-radius:5px;box-sizing:border-box;box-shadow:3px 3px 0 #8c8c8c"></div>
<div style="position:absolute;left:829px;top:313px;width:117px;height:27px;background:#d3d7cf;border:1px solid #000;border-radius:5px;box-sizing:border-box;box-shadow:3px 3px 0 #8c8c8c"></div>
<div style="position:absolute;left:829px;top:345px;width:117px;height:27px;background:#d3d7cf;border:1px solid #000;border-radius:5px;box-sizing:border-box;box-shadow:3px 3px 0 #8c8c8c"></div>
<div style="position:absolute;left:829px;top:378px;width:117px;height:27px;background:#d3d7cf;border:1px solid #000;border-radius:5px;box-sizing:border-box;box-shadow:3px 3px 0 #8c8c8c"></div>
<div style="position:absolute;left:829px;top:433px;width:117px;height:26px;background:#d3d7cf;border:1px solid #000;border-radius:5px;box-sizing:border-box;box-shadow:3px 3px 0 #8c8c8c"></div>
<div style="position:absolute;left:829px;top:465px;width:117px;height:26px;background:#d3d7cf;border:1px solid #000;border-radius:5px;box-sizing:border-box;box-shadow:3px 3px 0 #8c8c8c"></div>
<div style="position:absolute;left:829px;top:497px;width:117px;height:26px;background:#d3d7cf;border:1px solid #000;border-radius:5px;box-sizing:border-box;box-shadow:3px 3px 0 #8c8c8c"></div>
<div style="position:absolute;left:829px;top:530px;width:117px;height:26px;background:#d3d7cf;border:1px solid #000;border-radius:5px;box-sizing:border-box;box-shadow:3px 3px 0 #8c8c8c"></div>
<div style="position:absolute;left:414px;top:419px;width:14px;height:3px;background:#000"></div>
<div style="position:absolute;left:426px;top:351px;width:3px;height:138px;background:#000"></div>
<div style="position:absolute;left:426px;top:351px;width:11px;height:3px;background:#000"></div>
<div style="position:absolute;left:426px;top:486px;width:11px;height:3px;background:#000"></div>
<div style="position:absolute;left:621px;top:343px;width:14px;height:3px;background:#000"></div>
<div style="position:absolute;left:633px;top:317px;width:3px;height:56px;background:#000"></div>
<div style="position:absolute;left:633px;top:317px;width:11px;height:3px;background:#000"></div>
<div style="position:absolute;left:633px;top:370px;width:11px;height:3px;background:#000"></div>
<div style="position:absolute;left:621px;top:494px;width:14px;height:3px;background:#000"></div>
<div style="position:absolute;left:633px;top:468px;width:3px;height:57px;background:#000"></div>
<div style="position:absolute;left:633px;top:468px;width:11px;height:3px;background:#000"></div>
<div style="position:absolute;left:633px;top:522px;width:11px;height:3px;background:#000"></div>
<svg style="position:absolute;left:809px;top:0px;" width="21.00" height="768.00" viewBox="0 0 21 768"><rect x="0" y="311" width="4" height="3" fill="#000"/>
<path d="M10.5 290 V334" stroke="#000" stroke-width="3" stroke-dasharray="5 4" fill="none"/>
<rect x="9" y="290" width="5" height="3" fill="#000"/>
<rect x="9" y="331" width="5" height="3" fill="#000"/>
<rect x="18" y="290" width="3" height="3" fill="#000"/><rect x="18" y="331" width="3" height="3" fill="#000"/>
<rect x="8" y="310" width="4" height="5" fill="#000"/></svg>
<svg style="position:absolute;left:809px;top:0px;" width="21.00" height="768.00" viewBox="0 0 21 768"><rect x="0" y="375" width="4" height="3" fill="#000"/>
<path d="M10.5 354 V398" stroke="#000" stroke-width="3" stroke-dasharray="5 4" fill="none"/>
<rect x="9" y="354" width="5" height="3" fill="#000"/>
<rect x="9" y="395" width="5" height="3" fill="#000"/>
<rect x="18" y="354" width="3" height="3" fill="#000"/><rect x="18" y="395" width="3" height="3" fill="#000"/>
<rect x="8" y="374" width="4" height="5" fill="#000"/></svg>
<svg style="position:absolute;left:809px;top:0px;" width="21.00" height="768.00" viewBox="0 0 21 768"><rect x="0" y="463" width="4" height="3" fill="#000"/>
<path d="M10.5 442 V486" stroke="#000" stroke-width="3" stroke-dasharray="5 4" fill="none"/>
<rect x="9" y="442" width="5" height="3" fill="#000"/>
<rect x="9" y="483" width="5" height="3" fill="#000"/>
<rect x="18" y="442" width="3" height="3" fill="#000"/><rect x="18" y="483" width="3" height="3" fill="#000"/>
<rect x="8" y="462" width="4" height="5" fill="#000"/></svg>
<svg style="position:absolute;left:809px;top:0px;" width="21.00" height="768.00" viewBox="0 0 21 768"><rect x="0" y="527" width="4" height="3" fill="#000"/>
<path d="M10.5 506 V550" stroke="#000" stroke-width="3" stroke-dasharray="5 4" fill="none"/>
<rect x="9" y="506" width="5" height="3" fill="#000"/>
<rect x="9" y="547" width="5" height="3" fill="#000"/>
<rect x="18" y="506" width="3" height="3" fill="#000"/><rect x="18" y="547" width="3" height="3" fill="#000"/>
<rect x="8" y="526" width="4" height="5" fill="#000"/></svg>
<div style="position:absolute;left:162px;top:409px;width:23px;height:23px;background:#eaeaea;border-top:1px solid #fff;border-left:1px solid #fff;border-right:1px solid #a3a3a3;border-bottom:1px solid #a3a3a3;box-sizing:border-box"></div>
<svg style="position:absolute;left:162px;top:409px;" width="23.00" height="23.00" viewBox="0 0 23 23"><g fill="#000"><rect x="2" y="2" width="1" height="1"/><rect x="2" y="20" width="1" height="1"/><rect x="2" y="2" width="1" height="1"/><rect x="20" y="2" width="1" height="1"/><rect x="4" y="2" width="1" height="1"/><rect x="4" y="20" width="1" height="1"/><rect x="2" y="4" width="1" height="1"/><rect x="20" y="4" width="1" height="1"/><rect x="6" y="2" width="1" height="1"/><rect x="6" y="20" width="1" height="1"/><rect x="2" y="6" width="1" height="1"/><rect x="20" y="6" width="1" height="1"/><rect x="8" y="2" width="1" height="1"/><rect x="8" y="20" width="1" height="1"/><rect x="2" y="8" width="1" height="1"/><rect x="20" y="8" width="1" height="1"/><rect x="10" y="2" width="1" height="1"/><rect x="10" y="20" width="1" height="1"/><rect x="2" y="10" width="1" height="1"/><rect x="20" y="10" width="1" height="1"/><rect x="12" y="2" width="1" height="1"/><rect x="12" y="20" width="1" height="1"/><rect x="2" y="12" width="1" height="1"/><rect x="20" y="12" width="1" height="1"/><rect x="14" y="2" width="1" height="1"/><rect x="14" y="20" width="1" height="1"/><rect x="2" y="14" width="1" height="1"/><rect x="20" y="14" width="1" height="1"/><rect x="16" y="2" width="1" height="1"/><rect x="16" y="20" width="1" height="1"/><rect x="2" y="16" width="1" height="1"/><rect x="20" y="16" width="1" height="1"/><rect x="18" y="2" width="1" height="1"/><rect x="18" y="20" width="1" height="1"/><rect x="2" y="18" width="1" height="1"/><rect x="20" y="18" width="1" height="1"/><rect x="20" y="2" width="1" height="1"/><rect x="20" y="20" width="1" height="1"/><rect x="2" y="20" width="1" height="1"/><rect x="20" y="20" width="1" height="1"/></g></svg>
<svg style="position:absolute;left:162px;top:409px;" width="23.00" height="23.00" viewBox="0 0 23 23"><path d="M13.2 6 V15 L8 10.5Z" fill="#000"/></svg>
<div style="position:absolute;left:972px;top:332px;width:23px;height:23px;background:#eaeaea;border-top:1px solid #fff;border-left:1px solid #fff;border-right:1px solid #a3a3a3;border-bottom:1px solid #a3a3a3;box-sizing:border-box"></div>
<svg style="position:absolute;left:972px;top:332px;" width="23.00" height="23.00" viewBox="0 0 23 23"><path d="M7.8 6 V15 L13.2 10.5Z" fill="#000"/></svg>
<div style="position:absolute;left:972px;top:484px;width:23px;height:23px;background:#eaeaea;border-top:1px solid #fff;border-left:1px solid #fff;border-right:1px solid #a3a3a3;border-bottom:1px solid #a3a3a3;box-sizing:border-box"></div>
<svg style="position:absolute;left:972px;top:484px;" width="23.00" height="23.00" viewBox="0 0 23 23"><path d="M7.8 6 V15 L13.2 10.5Z" fill="#000"/></svg>
<div style="position:absolute;left:7px;top:717px;width:1011px;height:1px;background:#a6a6a6"></div>
<div style="position:absolute;left:7px;top:718px;width:1011px;height:1px;background:#f8f8f8"></div>
<div class="t" style="left:7.76px;top:720px;font-size:13.5px;line-height:13.5px;letter-spacing:-0.014px;font-weight:400;color:#000;transform:scaleX(1.05);transform-origin:0 0;">[I0178] De Clerck, Ludovicus Dionysius</div>
<svg style="position:absolute;left:999px;top:719px;" width="20.00" height="20.00" viewBox="0 0 20 20"><rect x="15" y="0" width="2" height="2" fill="#9c9c9c"/><rect x="16" y="1" width="1" height="1" fill="#fff"/><rect x="10" y="5" width="2" height="2" fill="#9c9c9c"/><rect x="11" y="6" width="1" height="1" fill="#fff"/><rect x="15" y="5" width="2" height="2" fill="#9c9c9c"/><rect x="16" y="6" width="1" height="1" fill="#fff"/><rect x="5" y="10" width="2" height="2" fill="#9c9c9c"/><rect x="6" y="11" width="1" height="1" fill="#fff"/><rect x="10" y="10" width="2" height="2" fill="#9c9c9c"/><rect x="11" y="11" width="1" height="1" fill="#fff"/><rect x="15" y="10" width="2" height="2" fill="#9c9c9c"/><rect x="16" y="11" width="1" height="1" fill="#fff"/><rect x="0" y="15" width="2" height="2" fill="#9c9c9c"/><rect x="1" y="16" width="1" height="1" fill="#fff"/><rect x="5" y="15" width="2" height="2" fill="#9c9c9c"/><rect x="6" y="16" width="1" height="1" fill="#fff"/><rect x="10" y="15" width="2" height="2" fill="#9c9c9c"/><rect x="11" y="16" width="1" height="1" fill="#fff"/><rect x="15" y="15" width="2" height="2" fill="#9c9c9c"/><rect x="16" y="16" width="1" height="1" fill="#fff"/></svg>
<div style="position:absolute;left:0px;top:743px;width:1024px;height:25px;background:#eaeaea"></div>
<div style="position:absolute;left:0px;top:743px;width:1024px;height:1px;background:#fafafa"></div>
<div style="position:absolute;left:0px;top:767px;width:1024px;height:1px;background:#bcbcbc"></div>
<svg style="position:absolute;left:0px;top:744px;" width="26.00" height="24.00" viewBox="0 0 26 24">
<defs><linearGradient id="gSd" x1="0" y1="0" x2="0" y2="1"><stop offset="0" stop-color="#d6ead0"/><stop offset="1" stop-color="#a4cc90"/></linearGradient>
<linearGradient id="gPen" x1="0" y1="0" x2="1" y2="1"><stop offset="0" stop-color="#f3e23a"/><stop offset="1" stop-color="#ee7a10"/></linearGradient></defs>
<rect x="3.5" y="4.3" width="19" height="14.2" rx="1.5" fill="url(#gSd)" stroke="#555" stroke-width="1.1"/>
<path d="M7.8 6.5 H13 L15.5 9 V16.3 H7.8Z" fill="#fbfbfb" stroke="#8a8a8a" stroke-width="0.9"/>
<path d="M13 6.5 V9 H15.5" fill="#ddd" stroke="#8a8a8a" stroke-width="0.7"/>
<path d="M14.5 13 L19 8.5 L20.5 10 L16 14.5Z" fill="url(#gPen)" stroke="#d8600a" stroke-width="0.6"/>
<path d="M13.2 15.2 L14.5 13 L16 14.5Z" fill="#111"/>
<g fill="#5b8ad0" stroke="#1f4a9a" stroke-width="1.1" stroke-linejoin="round">
<path d="M2.6 3.2 H7.6 L2.6 8.2Z"/><path d="M23.4 3.2 H18.4 L23.4 8.2Z"/>
<path d="M2.6 19.6 H7.6 L2.6 14.6Z"/><path d="M23.4 19.6 H18.4 L23.4 14.6Z"/></g>
</svg>
<div style="position:absolute;left:25px;top:745px;width:1px;height:22px;background:#a8a8a8"></div>
<div style="position:absolute;left:26px;top:745px;width:1px;height:22px;background:#fdfdfd"></div>
<svg style="position:absolute;left:29px;top:751px;" width="5.00" height="12.00" viewBox="0 0 5 12"><rect x="1" y="0" width="2" height="2" fill="#9a9a9a"/><rect x="1" y="4" width="2" height="2" fill="#9a9a9a"/><rect x="1" y="8" width="2" height="2" fill="#9a9a9a"/></svg>
<div style="position:absolute;left:36px;top:744px;width:166px;height:24px;background:#ebebeb;border-left:1px solid #fff;border-top:1px solid #fff;border-right:1px solid #a8a8a8;border-bottom:1px solid #a8a8a8;box-sizing:border-box"></div>
<div style="position:absolute;left:202px;top:744px;width:167px;height:24px;background:#cecece;border-left:1px solid #a0a0a0;border-top:1px solid #a0a0a0;border-right:1px solid #fff;border-bottom:1px solid #fff;box-sizing:border-box"></div>
<div style="position:absolute;left:369px;top:744px;width:167px;height:24px;background:#ebebeb;border-left:1px solid #fff;border-top:1px solid #fff;border-right:1px solid #a8a8a8;border-bottom:1px solid #a8a8a8;box-sizing:border-box"></div>
<svg style="position:absolute;left:42px;top:749px;opacity:0.5;" width="15.12" height="13.44" viewBox="0 0 18 16"><path d="M4 7.9 H5.6 M5.6 3.6 V12.3 M5.6 3.6 H6.8 M5.6 12.3 H6.8 M10.6 3.6 H12.3 M12.3 1.3 V5.3 M12.3 1.3 H13 M12.3 5.3 H13 M10.6 12.3 H12.3 M12.3 9.7 V14 M12.3 9.7 H13 M12.3 14 H13" stroke="#2c3440" stroke-width="1.1" fill="none"/><rect x="0" y="6.2" width="4.2" height="3.4" rx="0.9" fill="#ecd3a6" stroke="#c9ab7c" stroke-width="0.5"/><rect x="6.5" y="2" width="4.4" height="3.4" rx="0.9" fill="#ecd3a6" stroke="#c9ab7c" stroke-width="0.5"/><rect x="6.5" y="10.6" width="4.4" height="3.2" rx="0.9" fill="#ecd3a6" stroke="#c9ab7c" stroke-width="0.5"/><rect x="13" y="0" width="4.6" height="2.6" rx="0.9" fill="#ecd3a6" stroke="#c9ab7c" stroke-width="0.5"/><rect x="13" y="4" width="4.6" height="2.6" rx="0.9" fill="#ecd3a6" stroke="#c9ab7c" stroke-width="0.5"/><rect x="13" y="8.4" width="4.6" height="2.6" rx="0.9" fill="#ecd3a6" stroke="#c9ab7c" stroke-width="0.5"/><rect x="13" y="12.7" width="4.6" height="2.6" rx="0.9" fill="#ecd3a6" stroke="#c9ab7c" stroke-width="0.5"/></svg>
<svg style="position:absolute;left:208px;top:749px;" width="15.12" height="13.44" viewBox="0 0 18 16"><path d="M4 7.9 H5.6 M5.6 3.6 V12.3 M5.6 3.6 H6.8 M5.6 12.3 H6.8 M10.6 3.6 H12.3 M12.3 1.3 V5.3 M12.3 1.3 H13 M12.3 5.3 H13 M10.6 12.3 H12.3 M12.3 9.7 V14 M12.3 9.7 H13 M12.3 14 H13" stroke="#2c3440" stroke-width="1.1" fill="none"/><rect x="0" y="6.2" width="4.2" height="3.4" rx="0.9" fill="#ecd3a6" stroke="#c9ab7c" stroke-width="0.5"/><rect x="6.5" y="2" width="4.4" height="3.4" rx="0.9" fill="#ecd3a6" stroke="#c9ab7c" stroke-width="0.5"/><rect x="6.5" y="10.6" width="4.4" height="3.2" rx="0.9" fill="#ecd3a6" stroke="#c9ab7c" stroke-width="0.5"/><rect x="13" y="0" width="4.6" height="2.6" rx="0.9" fill="#ecd3a6" stroke="#c9ab7c" stroke-width="0.5"/><rect x="13" y="4" width="4.6" height="2.6" rx="0.9" fill="#ecd3a6" stroke="#c9ab7c" stroke-width="0.5"/><rect x="13" y="8.4" width="4.6" height="2.6" rx="0.9" fill="#ecd3a6" stroke="#c9ab7c" stroke-width="0.5"/><rect x="13" y="12.7" width="4.6" height="2.6" rx="0.9" fill="#ecd3a6" stroke="#c9ab7c" stroke-width="0.5"/></svg>
<svg style="position:absolute;left:375px;top:748px;" width="17.00" height="15.00" viewBox="0 0 17 15">
<path d="M5 1 H11 L11.5 3.5 H4.5Z" fill="#e8e8e8" stroke="#111"/>
<rect x="0.8" y="3.5" width="15.4" height="10.7" rx="1.5" fill="#7a766f" stroke="#111" stroke-width="1.2"/>
<circle cx="8.5" cy="9" r="3.2" fill="#5a5752" stroke="#222"/>
<circle cx="8.5" cy="9" r="1.5" fill="#222"/>
</svg>
<div class="t" style="left:63.76px;top:749px;font-size:13.5px;line-height:13.5px;letter-spacing:0.230px;font-weight:400;color:#000;transform:scaleX(1.05);transform-origin:0 0;">[2006dec08.grdb -...</div>
<div class="t" style="left:229.52px;top:749px;font-size:13.5px;line-height:13.5px;letter-spacing:0.185px;font-weight:400;color:#000;transform:scaleX(1.05);transform-origin:0 0;">2006dec08.grdb - ...</div>
<div class="t" style="left:396.93px;top:749px;font-size:13.5px;line-height:13.5px;letter-spacing:-0.044px;font-weight:400;color:#000;transform:scaleX(1.05);transform-origin:0 0;">Take Screenshot w...</div>
<div style="position:absolute;left:946px;top:745px;width:27px;height:22px;background:#a6a6a6"></div>
<div style="position:absolute;left:973px;top:745px;width:27px;height:22px;background:#b6d0ee;border-top:1px solid #4a74a8;border-bottom:1px solid #4a74a8;box-shadow:inset 0 0 0 1px #fff;box-sizing:border-box"></div>
<svg style="position:absolute;left:979.8px;top:749px;" width="14.40" height="12.80" viewBox="0 0 18 16"><path d="M4 7.9 H5.6 M5.6 3.6 V12.3 M5.6 3.6 H6.8 M5.6 12.3 H6.8 M10.6 3.6 H12.3 M12.3 1.3 V5.3 M12.3 1.3 H13 M12.3 5.3 H13 M10.6 12.3 H12.3 M12.3 9.7 V14 M12.3 9.7 H13 M12.3 14 H13" stroke="#2c3440" stroke-width="1.1" fill="none"/><rect x="0" y="6.2" width="4.2" height="3.4" rx="0.9" fill="#ecd3a6" stroke="#c9ab7c" stroke-width="0.5"/><rect x="6.5" y="2" width="4.4" height="3.4" rx="0.9" fill="#ecd3a6" stroke="#c9ab7c" stroke-width="0.5"/><rect x="6.5" y="10.6" width="4.4" height="3.2" rx="0.9" fill="#ecd3a6" stroke="#c9ab7c" stroke-width="0.5"/><rect x="13" y="0" width="4.6" height="2.6" rx="0.9" fill="#ecd3a6" stroke="#c9ab7c" stroke-width="0.5"/><rect x="13" y="4" width="4.6" height="2.6" rx="0.9" fill="#ecd3a6" stroke="#c9ab7c" stroke-width="0.5"/><rect x="13" y="8.4" width="4.6" height="2.6" rx="0.9" fill="#ecd3a6" stroke="#c9ab7c" stroke-width="0.5"/><rect x="13" y="12.7" width="4.6" height="2.6" rx="0.9" fill="#ecd3a6" stroke="#c9ab7c" stroke-width="0.5"/></svg>
<svg style="position:absolute;left:1003px;top:745px;" width="21.00" height="21.00" viewBox="0 0 21 21">
<path d="M2 5 Q2 3 4 3 H10 L12 5 H18 Q20 5 20 7 V18 Q20 20 18 20 H4 Q2 20 2 18Z" fill="#3a6fbf" stroke="#1f4c8a"/>
<path d="M5 2 L17 4 L19 9 L6 7Z" fill="#e8eef6"/>
<path d="M2 9 H20 V18 Q20 20 18 20 H4 Q2 20 2 18Z" fill="#4b80cc"/>
</svg>
</body></html>
